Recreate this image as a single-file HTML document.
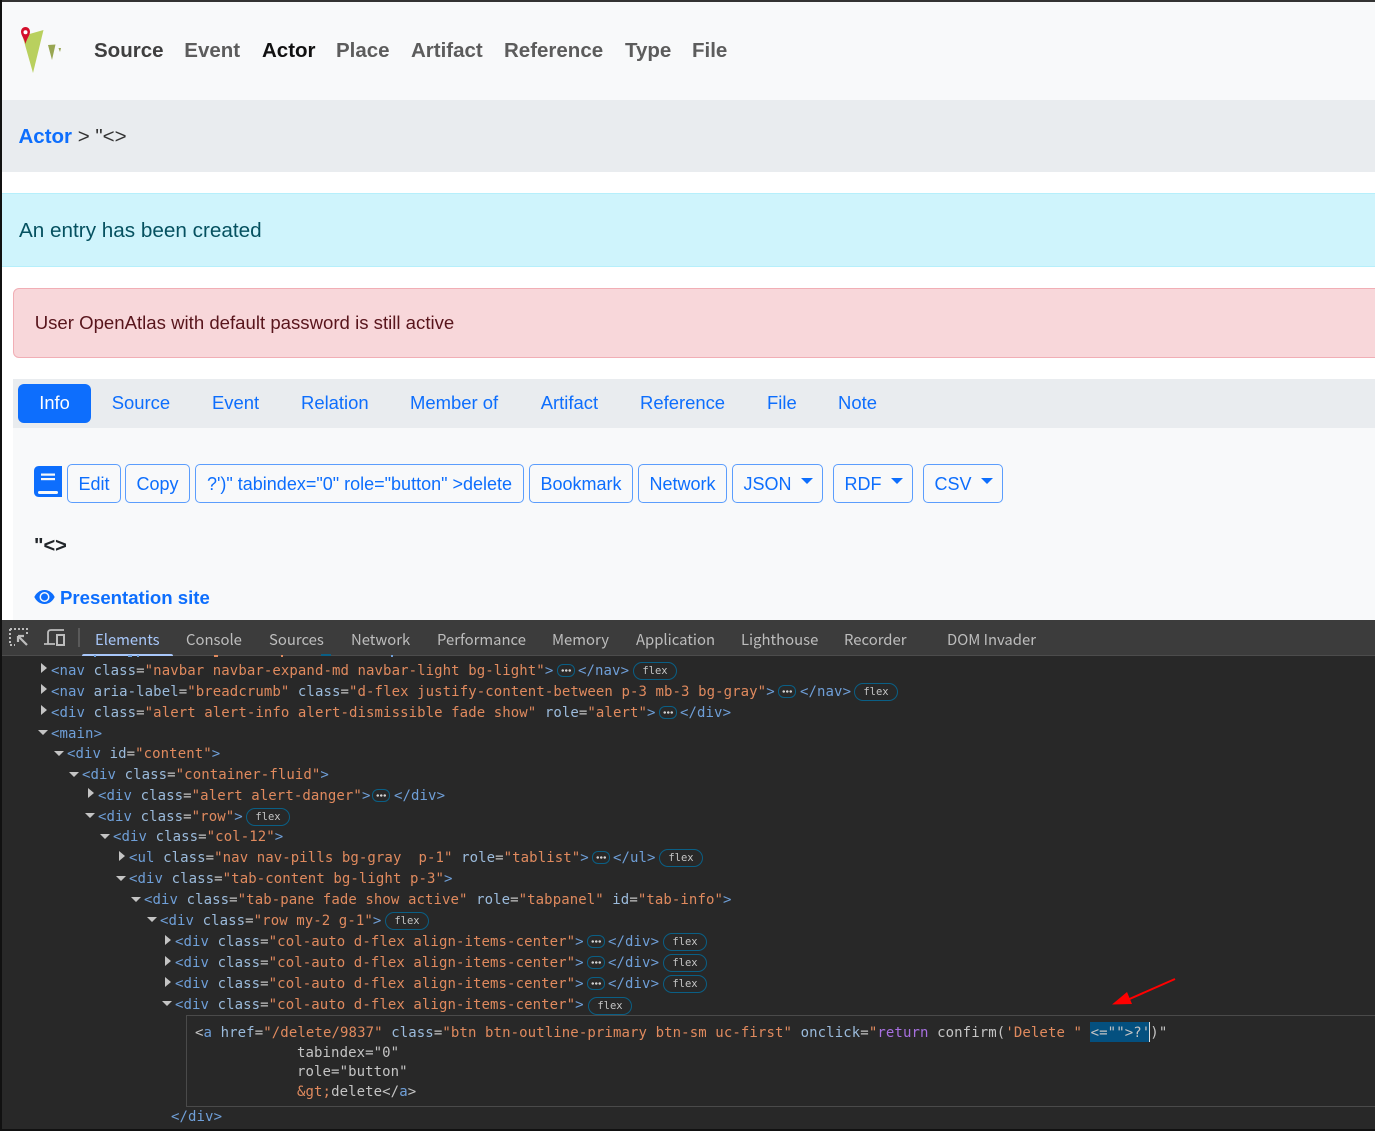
<!DOCTYPE html>
<html><head><meta charset="utf-8">
<style>
html,body{margin:0;padding:0;background:#fff}
#p{position:relative;width:1375px;height:1131px;overflow:hidden;background:#fff;font-family:"Liberation Sans",sans-serif}
.x{position:absolute;white-space:pre}
.n{top:38px;font-size:20.5px;line-height:26px;font-weight:700;color:#5c5c5c}
.tb{top:390px;font-size:18.45px;line-height:26px;color:#0d6efd}
.b{position:absolute;top:464px;height:37px;border:1px solid #5b9dfd;border-radius:5px;color:#0d6efd;font-size:18px;line-height:38px;text-align:center;white-space:pre;box-sizing:content-box}
.c{position:absolute;top:13px;width:0;height:0;border-left:6px solid transparent;border-right:6px solid transparent;border-top:6px solid #0d6efd}
.d{top:631px;font-family:"Noto Sans CJK SC",sans-serif;font-size:14.85px;line-height:18px;color:#bdbdbd}
.l{position:absolute;white-space:pre;font-family:"DejaVu Sans Mono",monospace;font-size:14px;line-height:20px;letter-spacing:.085px;color:#c4c4c4}
.t{color:#6f9fd8}.a{color:#9bbbdc}.v{color:#e08a5e}.q{color:#c4c4c4}
.f{position:absolute;height:16px;border:1px solid #0a5f85;border-radius:9px;color:#c4c4c4;font-family:"DejaVu Sans Mono",monospace;font-size:10.5px;line-height:16px;text-align:center;width:42px}
.e{position:absolute;width:16px;height:11px;border:1px solid #0a5f85;border-radius:6px}
.e i{position:absolute;left:3px;top:4px;width:10.500px;height:3px;background:radial-gradient(circle,#d0d0d0 1.100px,transparent 1.400px) 0 0/3.500px 3px}
.r{position:absolute;top:655px;height:2px}
</style></head><body>
<div id="p">
<!-- nav -->
<div class="x" style="left:0;top:2px;width:1375px;height:98px;background:#f8f9fa"></div>
<svg class="x" style="left:0;top:0" width="80" height="90" viewBox="0 0 80 90">
<polygon points="22.500,36 43.500,30 33,73" fill="#b9d05e"/>
<polygon points="48,45 55.500,44.500 52,60" fill="#98a652"/>
<polygon points="58.500,48 61,48 60,52" fill="#98a652"/>
<path d="M25.500 27C22.800 27 21 29.200 21 31.800C21 35.300 24.300 38.500 25.500 44C26.700 38.500 30 35.300 30 31.800C30 29.200 28.200 27 25.500 27z" fill="#d40f2b"/>
<circle cx="25.500" cy="32.300" r="2" fill="#fff"/>
</svg>
<div class="x n" style="left:94px;color:#3f3f3f">Source</div>
<div class="x n" style="left:184.300px">Event</div>
<div class="x n" style="left:262px;color:#111">Actor</div>
<div class="x n" style="left:336px">Place</div>
<div class="x n" style="left:411px">Artifact</div>
<div class="x n" style="left:504px">Reference</div>
<div class="x n" style="left:625px">Type</div>
<div class="x n" style="left:692px">File</div>
<!-- breadcrumb -->
<div class="x" style="left:0;top:100px;width:1375px;height:72px;background:#e9ecef"></div>
<div class="x" style="left:18.500px;top:123px;font-size:20.500px;line-height:27px;color:#333"><span style="color:#0d6efd;font-weight:700">Actor</span> &gt; "&lt;&gt;</div>
<!-- info alert -->
<div class="x" style="left:0;top:193px;width:1375px;height:74px;background:#cff4fc;border-top:1px solid #b6effb;border-bottom:1px solid #b6effb;box-sizing:border-box"></div>
<div class="x" style="left:19px;top:217px;font-size:20.700px;line-height:28px;color:#055160">An entry has been created</div>
<!-- danger alert -->
<div class="x" style="left:13px;top:288px;width:1380px;height:70px;background:#f8d7da;border:1px solid #f1aeb5;border-radius:6px;box-sizing:border-box"></div>
<div class="x" style="left:34.700px;top:310px;font-size:18.600px;line-height:26px;color:#58151c">User OpenAtlas with default password is still active</div>
<!-- tabs -->
<div class="x" style="left:13px;top:379px;width:1362px;height:49px;background:#e9ecef"></div>
<div class="x" style="left:18px;top:384px;width:73px;height:39px;background:#0d6efd;border-radius:6px;color:#fff;font-size:18.300px;line-height:38px;text-align:center">Info</div>
<div class="x tb" style="left:111.700px">Source</div>
<div class="x tb" style="left:212px">Event</div>
<div class="x tb" style="left:301px">Relation</div>
<div class="x tb" style="left:410px">Member of</div>
<div class="x tb" style="left:540.700px">Artifact</div>
<div class="x tb" style="left:640px">Reference</div>
<div class="x tb" style="left:767px">File</div>
<div class="x tb" style="left:838px">Note</div>
<!-- content -->
<div class="x" style="left:13px;top:428px;width:1362px;height:192px;background:#f8f9fa"></div>
<svg class="x" style="left:34px;top:466px" width="28" height="31" viewBox="0 0 28 31">
<path d="M5 0H28V31H5C2 31 0 29 0 26V5C0 2 2 0 5 0z" fill="#0d6efd"/>
<rect x="4" y="25" width="20" height="3" rx="1.500" fill="#f8f9fa"/>
<rect x="7" y="7.500" width="14" height="2.200" fill="#f8f9fa"/>
<rect x="7" y="12" width="14" height="2.200" fill="#f8f9fa"/>
</svg>
<div class="b" style="left:67px;width:52px">Edit</div>
<div class="b" style="left:125px;width:63px">Copy</div>
<div class="b" style="left:195px;width:327px">?')" tabindex="0" role="button" &gt;delete</div>
<div class="b" style="left:529px;width:102px">Bookmark</div>
<div class="b" style="left:638px;width:87px">Network</div>
<div class="b" style="left:732px;width:89px;text-align:left;text-indent:10.500px">JSON<span class="c" style="left:68px"></span></div>
<div class="b" style="left:833px;width:78px;text-align:left;text-indent:10.500px">RDF<span class="c" style="left:57px"></span></div>
<div class="b" style="left:923px;width:78px;text-align:left;text-indent:10.500px">CSV<span class="c" style="left:57px"></span></div>
<div class="x" style="left:34px;top:533px;font-size:20px;line-height:26px;font-weight:700;color:#212529">"&lt;&gt;</div>
<svg class="x" style="left:34px;top:589px" width="21" height="16" viewBox="0 0 21 16">
<path d="M10.500 1C5.500 1 2 4.500 .3 8C2 11.500 5.500 15 10.500 15S19 11.500 20.700 8C19 4.500 15.500 1 10.500 1z" fill="#0d6efd"/>
<circle cx="10.500" cy="8" r="5" fill="#f8f9fa"/>
<circle cx="10.500" cy="8" r="3.500" fill="#0d6efd"/>
</svg>
<div class="x" style="left:60px;top:585px;font-size:18.600px;line-height:26px;font-weight:700;color:#0d6efd">Presentation site</div>
<!-- devtools -->
<div class="x" style="left:0;top:620px;width:1375px;height:511px;background:#282828"></div>
<div class="x" style="left:0;top:620px;width:1375px;height:36px;background:#3c3c3c;border-bottom:1px solid #4c4c4c;box-sizing:border-box"></div>
<svg class="x" style="left:8px;top:627px" width="72" height="22" viewBox="0 0 72 22" fill="none" stroke="#bdbdbd" stroke-width="2">
<path d="M2 2H19V7M2 2V18H7" stroke-dasharray="2 2"/>
<path d="M10 9L19 18M10 9H16M10 9V15" stroke-width="2.200"/>
<path d="M40 17V6C40 4 41 3 43 3H56M36 17H47" stroke-width="1.800"/>
<rect x="49" y="8" width="7" height="10" stroke-width="2"/>
<path d="M71 1V20" stroke="#5a5a5a"/>
</svg>
<div class="x d" style="left:95px;color:#a8c7fa">Elements</div>
<div class="x d" style="left:186px">Console</div>
<div class="x d" style="left:269px">Sources</div>
<div class="x d" style="left:351px">Network</div>
<div class="x d" style="left:437px">Performance</div>
<div class="x d" style="left:552px">Memory</div>
<div class="x d" style="left:636px">Application</div>
<div class="x d" style="left:741px">Lighthouse</div>
<div class="x d" style="left:844px">Recorder</div>
<div class="x d" style="left:947px">DOM Invader</div>
<div class="x" style="left:82px;top:654px;width:91px;height:2px;background:#a8c7fa;border-radius:2px 2px 0 0"></div>
<div class="r" style="left:94px;width:2px;background:#6f9fd8"></div>
<div class="r" style="left:128px;width:4px;background:#6f9fd8"></div>
<div class="r" style="left:137px;width:2px;background:#6f9fd8"></div>
<div class="r" style="left:214px;width:4px;background:#e08a5e"></div>
<div class="r" style="left:281px;width:2px;background:#e08a5e"></div>
<div class="r" style="left:321px;width:10px;top:654px;background:#0a5f85"></div>
<div class="r" style="left:391px;width:2px;background:#6f9fd8"></div>
<!-- tree arrows -->
<svg class="x" style="left:0;top:656px" width="200" height="360" fill="#c4c4c4">
<path d="M41 7l6 5-6 5zM41 28l6 5-6 5zM41 49l6 5-6 5z"/>
<path d="M38 74h10l-5 5zM54 95h10l-5 5zM69 116h10l-5 5z"/>
<path d="M88 132l6 5-6 5z"/>
<path d="M85 157h10l-5 5zM100 178h10l-5 5z"/>
<path d="M119 195l6 5-6 5z"/>
<path d="M116 220h10l-5 5zM131 241h10l-5 5zM147 261h10l-5 5z"/>
<path d="M165 279l6 5-6 5zM165 300l6 5-6 5zM165 321l6 5-6 5z"/>
<path d="M162 345h10l-5 5z"/>
</svg>
<!-- tree lines -->
<div class="l" style="left:51px;top:661px"><span class="t">&lt;nav</span> <span class="a">class</span>=<span class="v">"navbar navbar-expand-md navbar-light bg-light"</span><span class="t">&gt;</span></div>
<div class="e" style="left:557px;top:664px"><i></i></div><div class="l t" style="left:578px;top:661px">&lt;/nav&gt;</div><div class="f" style="left:633px;top:662px">flex</div>
<div class="l" style="left:51px;top:682px"><span class="t">&lt;nav</span> <span class="a">aria-label</span>=<span class="v">"breadcrumb"</span> <span class="a">class</span>=<span class="v">"d-flex justify-content-between p-3 mb-3 bg-gray"</span><span class="t">&gt;</span></div>
<div class="e" style="left:778px;top:685px"><i></i></div><div class="l t" style="left:800px;top:682px">&lt;/nav&gt;</div><div class="f" style="left:854px;top:683px">flex</div>
<div class="l" style="left:51px;top:703px"><span class="t">&lt;div</span> <span class="a">class</span>=<span class="v">"alert alert-info alert-dismissible fade show"</span> <span class="a">role</span>=<span class="v">"alert"</span><span class="t">&gt;</span></div>
<div class="e" style="left:659px;top:706px"><i></i></div><div class="l t" style="left:680px;top:703px">&lt;/div&gt;</div>
<div class="l t" style="left:51px;top:724px">&lt;main&gt;</div>
<div class="l" style="left:67px;top:744px"><span class="t">&lt;div</span> <span class="a">id</span>=<span class="v">"content"</span><span class="t">&gt;</span></div>
<div class="l" style="left:82px;top:765px"><span class="t">&lt;div</span> <span class="a">class</span>=<span class="v">"container-fluid"</span><span class="t">&gt;</span></div>
<div class="l" style="left:98px;top:786px"><span class="t">&lt;div</span> <span class="a">class</span>=<span class="v">"alert alert-danger"</span><span class="t">&gt;</span></div>
<div class="e" style="left:372px;top:789px"><i></i></div><div class="l t" style="left:394px;top:786px">&lt;/div&gt;</div>
<div class="l" style="left:98px;top:807px"><span class="t">&lt;div</span> <span class="a">class</span>=<span class="v">"row"</span><span class="t">&gt;</span></div><div class="f" style="left:246px;top:808px">flex</div>
<div class="l" style="left:113px;top:827px"><span class="t">&lt;div</span> <span class="a">class</span>=<span class="v">"col-12"</span><span class="t">&gt;</span></div>
<div class="l" style="left:129px;top:848px"><span class="t">&lt;ul</span> <span class="a">class</span>=<span class="v">"nav nav-pills bg-gray  p-1"</span> <span class="a">role</span>=<span class="v">"tablist"</span><span class="t">&gt;</span></div>
<div class="e" style="left:592px;top:851px"><i></i></div><div class="l t" style="left:613px;top:848px">&lt;/ul&gt;</div><div class="f" style="left:659px;top:849px">flex</div>
<div class="l" style="left:129px;top:869px"><span class="t">&lt;div</span> <span class="a">class</span>=<span class="v">"tab-content bg-light p-3"</span><span class="t">&gt;</span></div>
<div class="l" style="left:144px;top:890px"><span class="t">&lt;div</span> <span class="a">class</span>=<span class="v">"tab-pane fade show active"</span> <span class="a">role</span>=<span class="v">"tabpanel"</span> <span class="a">id</span>=<span class="v">"tab-info"</span><span class="t">&gt;</span></div>
<div class="l" style="left:160px;top:911px"><span class="t">&lt;div</span> <span class="a">class</span>=<span class="v">"row my-2 g-1"</span><span class="t">&gt;</span></div><div class="f" style="left:385px;top:912px">flex</div>
<div class="l" style="left:175px;top:932px"><span class="t">&lt;div</span> <span class="a">class</span>=<span class="v">"col-auto d-flex align-items-center"</span><span class="t">&gt;</span></div>
<div class="e" style="left:587px;top:935px"><i></i></div><div class="l t" style="left:608px;top:932px">&lt;/div&gt;</div><div class="f" style="left:663px;top:933px">flex</div>
<div class="l" style="left:175px;top:953px"><span class="t">&lt;div</span> <span class="a">class</span>=<span class="v">"col-auto d-flex align-items-center"</span><span class="t">&gt;</span></div>
<div class="e" style="left:587px;top:956px"><i></i></div><div class="l t" style="left:608px;top:953px">&lt;/div&gt;</div><div class="f" style="left:663px;top:954px">flex</div>
<div class="l" style="left:175px;top:974px"><span class="t">&lt;div</span> <span class="a">class</span>=<span class="v">"col-auto d-flex align-items-center"</span><span class="t">&gt;</span></div>
<div class="e" style="left:587px;top:977px"><i></i></div><div class="l t" style="left:608px;top:974px">&lt;/div&gt;</div><div class="f" style="left:663px;top:975px">flex</div>
<div class="l" style="left:175px;top:995px"><span class="t">&lt;div</span> <span class="a">class</span>=<span class="v">"col-auto d-flex align-items-center"</span><span class="t">&gt;</span></div><div class="f" style="left:588px;top:997px">flex</div>
<!-- editor -->
<div class="x" style="left:186px;top:1015px;width:1200px;height:92px;background:#282828;border:1px solid #4a4a4a;box-sizing:border-box"></div>
<div class="x" style="left:1090px;top:1022px;width:59px;height:20px;background:#04507f"></div>
<div class="x" style="left:1149px;top:1022px;width:1px;height:20px;background:#ddd"></div>
<div class="l" style="left:195px;top:1023px;letter-spacing:.1px">&lt;<span class="t">a</span> <span class="a">href</span>=<span class="v">"/delete/9837"</span> <span class="a">class</span>=<span class="v">"btn btn-outline-primary btn-sm uc-first"</span> <span class="a">onclick</span>=<span class="v">"</span><span style="color:#a770e0">return</span> confirm(<span class="v">'Delete " </span>&lt;=""&gt;?')"</div>
<div class="l" style="left:297px;top:1043px">tabindex="0"</div>
<div class="l" style="left:297px;top:1062px">role="button"</div>
<div class="l" style="left:297px;top:1082px"><span class="v">&amp;gt;</span>delete&lt;/<span class="t">a</span>&gt;</div>
<div class="l t" style="left:171px;top:1107px">&lt;/div&gt;</div>
<!-- red arrow -->
<svg class="x" style="left:1100px;top:970px" width="85" height="40" viewBox="0 0 85 40">
<path d="M75 9L25 31" stroke="#f00" stroke-width="2"/>
<path d="M12 34.500L27 22L32 34z" fill="#f00"/>
</svg>
<!-- frame -->
<div class="x" style="left:0;top:0;width:1375px;height:1.500px;background:#333"></div>
<div class="x" style="left:0;top:0;width:2px;height:1131px;background:#111"></div>
<div class="x" style="left:0;top:1129px;width:1375px;height:2px;background:#111"></div>
</div>
</body></html>
